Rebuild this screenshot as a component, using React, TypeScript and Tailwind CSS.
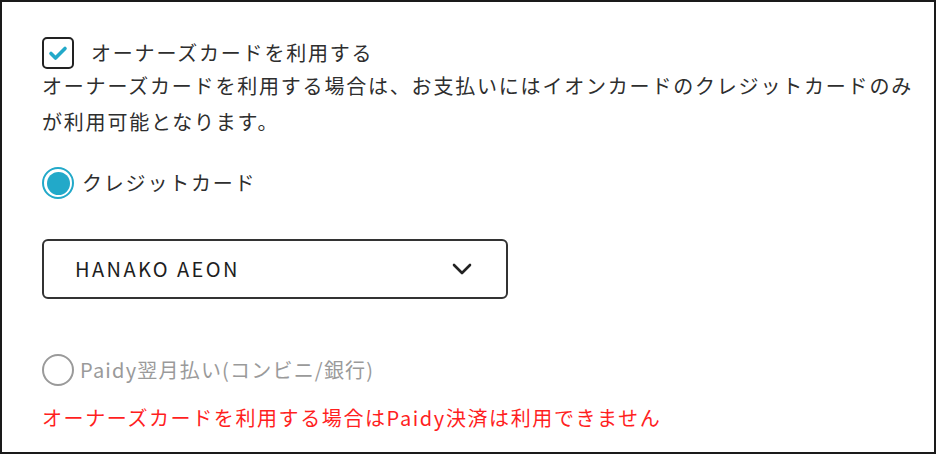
import React from 'react';

const font = { fontFamily: '"Noto Sans CJK JP", "Noto Sans", sans-serif' };

export default function App() {
  return (
    <div
      className="w-[936px] h-[454px] border-2 border-[#1a1a1a] bg-white pl-[40px] pt-[35px] text-[#2e2e2e]"
      style={font}
    >
      {/* オーナーズカード */}
      <label className="flex items-center h-[31px] gap-[17px]">
        <span className="w-[32px] h-[32px] rounded-[5px] border-2 border-[#222] flex items-center justify-center">
          <svg width="20" height="16" viewBox="0 0 20 16" fill="none">
            <path
              d="M3 8.5l4.5 4.5L17 3.5"
              stroke="#22a9c9"
              strokeWidth="3.6"
              strokeLinecap="round"
              strokeLinejoin="round"
            />
          </svg>
        </span>
        <span className="text-[20px] tracking-[1.8px] leading-[36px]">
          オーナーズカードを利用する
        </span>
      </label>
      <p className="w-[880px] text-[20px] tracking-[1.8px] leading-[36px]">
        オーナーズカードを利用する場合は、お支払いにはイオンカードのクレジットカードのみが利用可能となります。
      </p>

      {/* クレジットカード */}
      <label className="mt-[27px] flex items-center gap-[8px] h-[32px]">
        <span className="w-[32px] h-[32px] rounded-full border-2 border-[#22a9c9] flex items-center justify-center">
          <span className="w-[23px] h-[23px] rounded-full bg-[#22a9c9]" />
        </span>
        <span className="text-[20px] tracking-[1.8px]">クレジットカード</span>
      </label>

      <div className="mt-[40px] w-[466px] h-[60px] rounded-[6px] border-2 border-[#333] flex items-center justify-between pl-[31px] pr-[34px]">
        <span className="text-[20px] tracking-[2.4px] text-[#1e1e1e]">HANAKO AEON</span>
        <svg width="20" height="12" viewBox="0 0 20 12" fill="none">
          <path
            d="M2 2l8 8 8-8"
            stroke="#222"
            strokeWidth="2.6"
            strokeLinecap="round"
            strokeLinejoin="round"
          />
        </svg>
      </div>

      {/* Paidy */}
      <label className="mt-[55px] flex items-center gap-[6px] h-[32px]">
        <span className="w-[32px] h-[32px] rounded-full border-2 border-[#9a9a9a]" />
        <span className="text-[20px] tracking-[1.2px] text-[#9a9a9a]">
          Paidy翌月払い(コンビニ/銀行)
        </span>
      </label>
      <p className="mt-[14px] text-[20px] tracking-[1.6px] leading-[36px] text-[#ff1f1f]">
        オーナーズカードを利用する場合はPaidy決済は利用できません
      </p>
    </div>
  );
}
